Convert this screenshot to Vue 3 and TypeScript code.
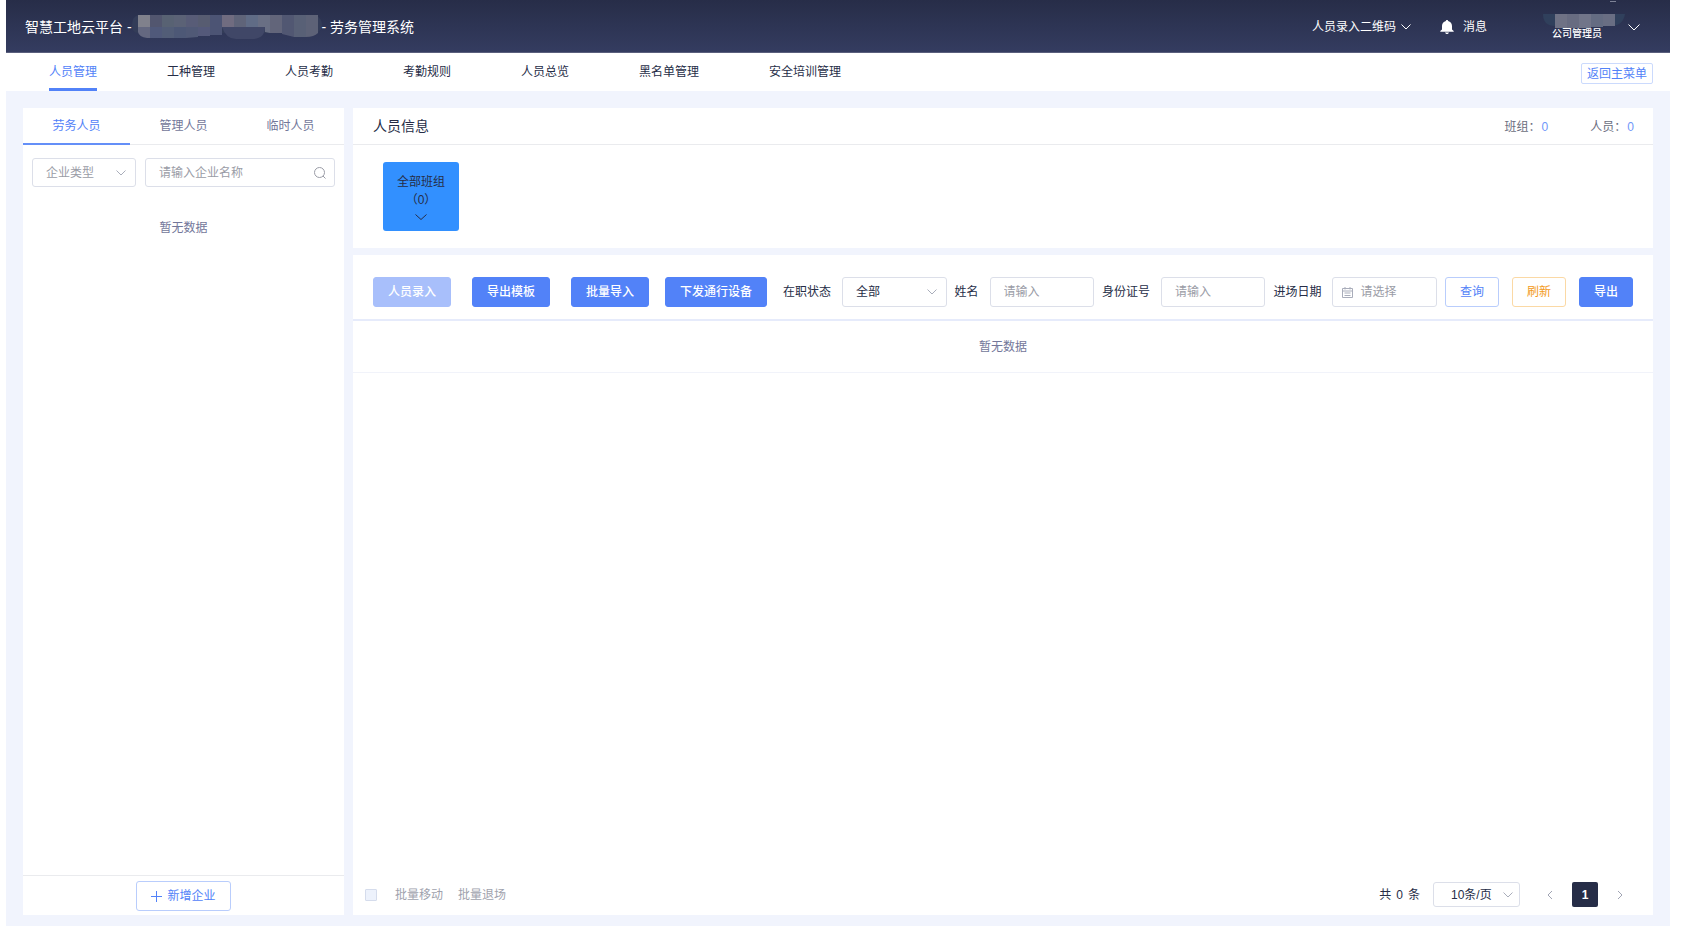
<script setup lang="ts">
import { ref } from 'vue'

const navItems: string[] = ['人员管理', '工种管理', '人员考勤', '考勤规则', '人员总览', '黑名单管理', '安全培训管理']
const tabs: string[] = ['劳务人员', '管理人员', '临时人员']
const activeNav = ref(0)
const activeTab = ref(0)
const company = ref('')
const personName = ref('')
const idNumber = ref('')
const entryDate = ref('')
const allChecked = ref(false)
</script>

<template>
  <div class="page">
    <header class="topbar">
      <h1 class="title">
        <span>智慧工地云平台 -</span>
        <svg class="title-mask" viewBox="0 0 190 24" aria-hidden="true">
          <path d="M6 0h178q6 4 6 10t-6 8H6Q0 18 0 10T6 0z" fill="#333c58" />
          <path d="M6 0h12v12H6z" fill="#80818c" />
          <path d="M6 12h12v11h-3q-8-1-9-6z" fill="#646880" />
          <path d="M18 0h12v12H18z" fill="#52566f" />
          <path d="M30 0h12v12H30z" fill="#586273" />
          <path d="M42 0h12v12H42z" fill="#5b6276" />
          <path d="M54 0h12v12H54z" fill="#585c77" />
          <path d="M66 0h12v12H66z" fill="#575c71" />
          <path d="M78 0h12v20H78z" fill="#4c5474" />
          <path d="M18 12h12v11H18z" fill="#50597a" />
          <path d="M30 12h12v11H30z" fill="#525d77" />
          <path d="M42 12h12v11H42z" fill="#4d5876" />
          <path d="M54 12h12v10l-12 1z" fill="#505976" />
          <path d="M66 12h12v9H66z" fill="#54597a" />
          <path d="M90 0h12v12H90z" fill="#706c80" />
          <path d="M102 0h12v12h-12z" fill="#5f6479" />
          <path d="M114 0h12v12h-12z" fill="#606c86" />
          <path d="M90 12h43q0 12-13 12h-16q-10 0-14-12z" fill="#404767" />
          <path d="M126 0h12v18l-5-1V12h-7z" fill="#696f84" />
          <path d="M138 0h12v18h-12z" fill="#62657a" />
          <path d="M150 0h12v22l-12-3z" fill="#515772" />
          <path d="M162 0h12v22h-12z" fill="#586076" />
          <path d="M174 0h12v18q-4 4-12 4z" fill="#5d6277" />
        </svg>
        <span>- 劳务管理系统</span>
      </h1>
      <div class="top-actions">
        <button class="top-btn qr" type="button">
          人员录入二维码
          <svg class="chev" viewBox="0 0 10 6"><path d="M.5.5 5 5 9.500.5" /></svg>
        </button>
        <button class="top-btn message" type="button">
          <svg class="bell" viewBox="0 0 14 14"><path d="M7 0c.7 0 1.100.4 1.100 1C10.500 1.500 12 3.400 12 6v3.500l1.700 1.500v.8H.3V11L2 9.500V6c0-2.600 1.500-4.500 3.900-5C5.900.4 6.300 0 7 0zM5 12.500h4c-.2.900-1 1.500-2 1.500s-1.800-.6-2-1.500z" /></svg>
          消息
        </button>
        <button class="top-btn user" type="button">
          <span class="user-info">
            <svg class="user-mask" viewBox="0 0 82 14" aria-hidden="true">
              <path d="M67-13h6v1h-6z" fill="#7d8296" />
              <path d="M0 0h82q-2 12-14 12H12Q0 12 0 0z" fill="#30405c" />
              <path d="M12 0h12v14H12z" fill="#6f7285" />
              <path d="M24 0h12v14H24z" fill="#686c81" />
              <path d="M36 0h12v14H36z" fill="#717589" />
              <path d="M48 0h12v13H48z" fill="#646c82" />
              <path d="M60 0h12v12H60z" fill="#696e83" />
            </svg>
            <span class="role">公司管理员</span>
          </span>
          <svg class="chev big" viewBox="0 0 12 7"><path d="M.5.5 6 6 11.500.5" /></svg>
        </button>
      </div>
    </header>

    <nav class="nav">
      <a
        v-for="(item, i) in navItems"
        :key="item"
        href="#"
        class="nav-item"
        :class="{ active: i === activeNav }"
        @click.prevent="activeNav = i"
      >{{ item }}</a>
      <button class="back" type="button">返回主菜单</button>
    </nav>

    <main class="body">
      <aside class="side panel">
        <div class="tabs">
          <button
            v-for="(tab, i) in tabs"
            :key="tab"
            type="button"
            class="tab"
            :class="{ active: i === activeTab }"
            @click="activeTab = i"
          >{{ tab }}</button>
        </div>
        <div class="side-filter">
          <div class="field select">
            <select class="placeholder" aria-label="企业类型"><option>企业类型</option></select>
            <svg class="chev" viewBox="0 0 10 6"><path d="M.5.5 5 5 9.500.5" /></svg>
          </div>
          <div class="field search">
            <input v-model="company" type="text" placeholder="请输入企业名称" aria-label="企业名称" />
            <svg class="lens" viewBox="0 0 12 12"><circle cx="5.500" cy="5.500" r="5" /><path d="M9 9l2.500 2.500" /></svg>
          </div>
        </div>
        <p class="side-empty">暂无数据</p>
        <div class="side-foot">
          <button class="btn outline add" type="button">
            <svg class="plus" viewBox="0 0 11 11"><path d="M5.500 0v11M0 5.500h11" /></svg>
            新增企业
          </button>
        </div>
      </aside>

      <div class="content">
        <section class="info panel">
          <div class="info-head">
            <h2>人员信息</h2>
            <p class="counts">
              <span>班组：<b>0</b></span>
              <span>人员：<b>0</b></span>
            </p>
          </div>
          <div class="groups">
            <button class="group" type="button">
              <span>全部班组</span>
              <span>（0）</span>
              <svg class="chev" viewBox="0 0 12 6"><path d="M.5.5 6 5.500 11.500.5" /></svg>
            </button>
          </div>
        </section>

        <section class="list panel">
          <div class="toolbar">
            <div class="bulk">
              <button class="btn primary" type="button" disabled>人员录入</button>
              <button class="btn primary" type="button">导出模板</button>
              <button class="btn primary" type="button">批量导入</button>
            </div>
            <button class="btn primary" type="button">下发通行设备</button>
            <form class="filters" @submit.prevent>
              <label for="status">在职状态</label>
              <div class="field select">
                <select id="status"><option>全部</option></select>
                <svg class="chev" viewBox="0 0 10 6"><path d="M.5.5 5 5 9.500.5" /></svg>
              </div>
              <label for="person">姓名</label>
              <div class="field"><input id="person" v-model="personName" type="text" placeholder="请输入" /></div>
              <label for="idno">身份证号</label>
              <div class="field"><input id="idno" v-model="idNumber" type="text" placeholder="请输入" /></div>
              <label for="entry">进场日期</label>
              <div class="field date">
                <svg class="cal" viewBox="0 0 11 11"><path d="M.5 1.500h10v9H.5zM.5 4h10M3 0v2.500M8 0v2.500M2.500 6h6M2.500 8.500h6" /></svg>
                <input id="entry" v-model="entryDate" type="text" placeholder="请选择" />
              </div>
              <div class="actions">
                <button class="btn outline" type="submit">查询</button>
                <button class="btn warn" type="button">刷新</button>
                <button class="btn primary" type="button">导出</button>
              </div>
            </form>
          </div>
          <p class="list-empty">暂无数据</p>
          <footer class="list-foot">
            <input v-model="allChecked" class="check" type="checkbox" aria-label="全选" />
            <button class="text-btn" type="button" disabled>批量移动</button>
            <button class="text-btn" type="button" disabled>批量退场</button>
            <div class="pager">
              <span class="total"><span>共</span><span>0</span><span>条</span></span>
              <div class="field select size">
                <select aria-label="每页条数"><option>10条/页</option></select>
                <svg class="chev" viewBox="0 0 10 6"><path d="M.5.5 5 5 9.500.5" /></svg>
              </div>
              <button class="arrow" type="button" aria-label="上一页">
                <svg viewBox="0 0 6 10"><path d="M5 1 1 5l4 4" /></svg>
              </button>
              <button class="current" type="button">1</button>
              <button class="arrow" type="button" aria-label="下一页">
                <svg viewBox="0 0 6 10"><path d="M1 1l4 4-4 4" /></svg>
              </button>
            </div>
          </footer>
        </section>
      </div>
    </main>
  </div>
</template>

<style>
body {
  background: #fff;
}
</style>

<style scoped>
.page,
.page * {
  box-sizing: border-box;
}

.page {
  display: flex;
  flex-direction: column;
  min-height: 100vh;
  padding: 0 33px 0 6px;
  color: #262d47;
  font-family: "Liberation Sans", "Noto Sans CJK SC", sans-serif;
  font-size: 12px;
  line-height: 18px;
}

h1,
h2,
p {
  margin: 0;
  font-weight: 400;
}

button,
input,
select {
  margin: 0;
  padding: 0;
  border: 0;
  background: none;
  color: inherit;
  font: inherit;
}

svg {
  display: block;
  flex: none;
  fill: none;
  stroke: none;
}

.chev,
.lens,
.plus,
.cal,
.arrow svg {
  stroke: currentColor;
}

.chev {
  width: 10px;
  height: 6px;
}

.topbar {
  display: flex;
  align-items: center;
  justify-content: space-between;
  height: 53px;
  padding: 2px 30px 0 19px;
  border-bottom: 1px solid #5a5f7d;
  background: linear-gradient(#272d48, #343c60);
  color: #fff;
}

.title {
  display: flex;
  align-items: center;
  font-size: 14px;
  line-height: 20px;
}

.title-mask {
  width: 190px;
  height: 24px;
}

.top-actions,
.top-btn {
  display: flex;
  align-items: center;
}

.qr {
  gap: 5px;
}

.message {
  gap: 9px;
  margin-left: 29px;
}

.bell {
  width: 14px;
  height: 14px;
  fill: #fff;
}

.user {
  gap: 3px;
  margin-left: 56px;
}

.user-info {
  display: flex;
  flex-direction: column;
  align-items: center;
}

.user-mask {
  width: 82px;
  height: 14px;
  overflow: visible;
}

.role {
  margin-left: -14px;
  font-size: 10px;
  font-weight: 500;
  line-height: 12px;
}

.big {
  width: 12px;
  height: 7px;
}

.nav {
  display: flex;
  gap: 70px;
  height: 38px;
  padding: 0 17px 0 43px;
  background: #fff;
}

.nav-item {
  padding-top: 10px;
  color: inherit;
  text-decoration: none;
}

.nav-item.active {
  border-bottom: 3px solid #5282f8;
  color: #5282f8;
}

.back {
  height: 21px;
  margin: 10px 0 0 auto;
  padding: 0 5px;
  border: 1px solid #cbdafd;
  border-radius: 2px;
  color: #5282f8;
}

.body {
  display: flex;
  flex: 1;
  gap: 9px;
  padding: 17px 17px 11px;
  background: #f1f4fd;
}

.panel {
  display: flex;
  flex-direction: column;
  background: #fff;
}

.side {
  flex: none;
  width: 321px;
}

.tabs {
  display: flex;
  height: 37px;
  border-bottom: 1px solid #eaebee;
}

.tab {
  flex: 1;
  height: 37px;
  padding-top: 1px;
  border-bottom: 2px solid transparent;
  color: #73779a;
}

.tab.active {
  border-color: #648ff8;
  color: #5282f8;
}

.side-filter {
  display: flex;
  gap: 9px;
  padding: 13px 9px 0;
}

.field {
  display: flex;
  align-items: center;
  width: 104px;
  height: 30px;
  border: 1px solid #dcdfe9;
  border-radius: 3px;
  background: #fff;
}

.side-filter .field {
  height: 29px;
}

.field input,
.field select {
  flex: 1;
  width: 0;
  height: 100%;
  padding-left: 13px;
  outline: 0;
  appearance: none;
}

.field .chev {
  margin-right: 9px;
  color: #a9adba;
}

.field input::placeholder {
  color: #9a9ca6;
  opacity: 1;
}

.field .placeholder {
  color: #9a9ca6;
}

.side-filter .search {
  flex: 1;
}

.lens {
  width: 12px;
  height: 12px;
  margin-right: 8px;
  color: #9a9ca6;
}

.side-empty {
  padding-top: 32px;
  color: #73779a;
  text-align: center;
}

.side-foot {
  display: flex;
  justify-content: center;
  margin-top: auto;
  padding: 5px 0 4px;
  border-top: 1px solid #eaebee;
}

.btn {
  display: flex;
  align-items: center;
  justify-content: center;
  height: 30px;
  padding: 0 14px;
  border: 1px solid;
  border-radius: 3px;
  white-space: nowrap;
}

.primary {
  border-color: #5282f8;
  background: #5282f8;
  color: #fff;
  font-weight: 500;
}

.primary:disabled {
  border-color: #a8bffb;
  background: #a8bffb;
}

.outline {
  border-color: #b9cdfc;
  color: #5282f8;
}

.warn {
  border-color: #fbd9a5;
  color: #f39a1a;
}

.add {
  gap: 5px;
}

.plus {
  width: 11px;
  height: 11px;
}

.content {
  display: flex;
  flex: 1;
  flex-direction: column;
  gap: 7px;
  min-width: 0;
}

.info-head {
  display: flex;
  align-items: center;
  justify-content: space-between;
  height: 37px;
  padding: 0 19px 0 20px;
  border-bottom: 1px solid #eaebee;
}

.info-head h2 {
  font-size: 14px;
}

.counts {
  display: flex;
  gap: 42px;
  padding-top: 2px;
  color: #6b6e80;
}

.counts b {
  margin-left: 1px;
  color: #6f97f9;
  font-weight: 400;
}

.groups {
  display: flex;
  padding: 17px 30px;
}

.group {
  display: flex;
  flex-direction: column;
  align-items: center;
  width: 76px;
  height: 69px;
  padding-top: 11px;
  border-radius: 3px;
  background: #3290ff;
}

.group .chev {
  width: 12px;
  margin-top: 5px;
}

.list {
  flex: 1;
}

.toolbar {
  display: flex;
  align-items: center;
  gap: 16px;
  padding: 22px 20px 12px;
  border-bottom: 2px solid #e6ebfb;
}

.bulk {
  display: flex;
  gap: 21px;
}

.filters {
  display: flex;
  flex: 1;
  align-items: center;
  white-space: nowrap;
}

.filters .field {
  flex: 1;
  margin: 0 8px 0 11px;
}

.filters .date input {
  padding-left: 7px;
}

.cal {
  width: 11px;
  height: 11px;
  margin-left: 9px;
  color: #a9adba;
}

.actions {
  display: flex;
  gap: 13px;
}

.list-empty {
  padding: 17px 0 16px;
  border-bottom: 1px solid #f1f3fa;
  color: #73779a;
  text-align: center;
}

.list-foot {
  display: flex;
  align-items: center;
  margin-top: auto;
  padding: 0 23px 8px 12px;
}

.check {
  width: 12px;
  height: 12px;
  margin-right: 18px;
  border: 1px solid #d5dcec;
  border-radius: 1px;
  background: #edf2fc;
  appearance: none;
}

.text-btn {
  margin-right: 15px;
  color: #a0a2ad;
}

.pager {
  display: flex;
  align-items: center;
  margin-left: auto;
}

.total {
  display: flex;
  gap: 5px;
}

.size {
  width: 87px;
  height: 25px;
  margin: 0 20px 0 13px;
}

.size select {
  padding-left: 17px;
}

.size .chev {
  margin-right: 6px;
}

.arrow {
  display: flex;
  align-items: center;
  justify-content: center;
  width: 20px;
  height: 25px;
  color: #a0a4b3;
}

.arrow svg {
  width: 6px;
  height: 10px;
}

.current {
  width: 26px;
  height: 25px;
  margin: 0 12px;
  border-radius: 2px;
  background: #262d47;
  color: #fff;
  font-weight: 700;
}
</style>
